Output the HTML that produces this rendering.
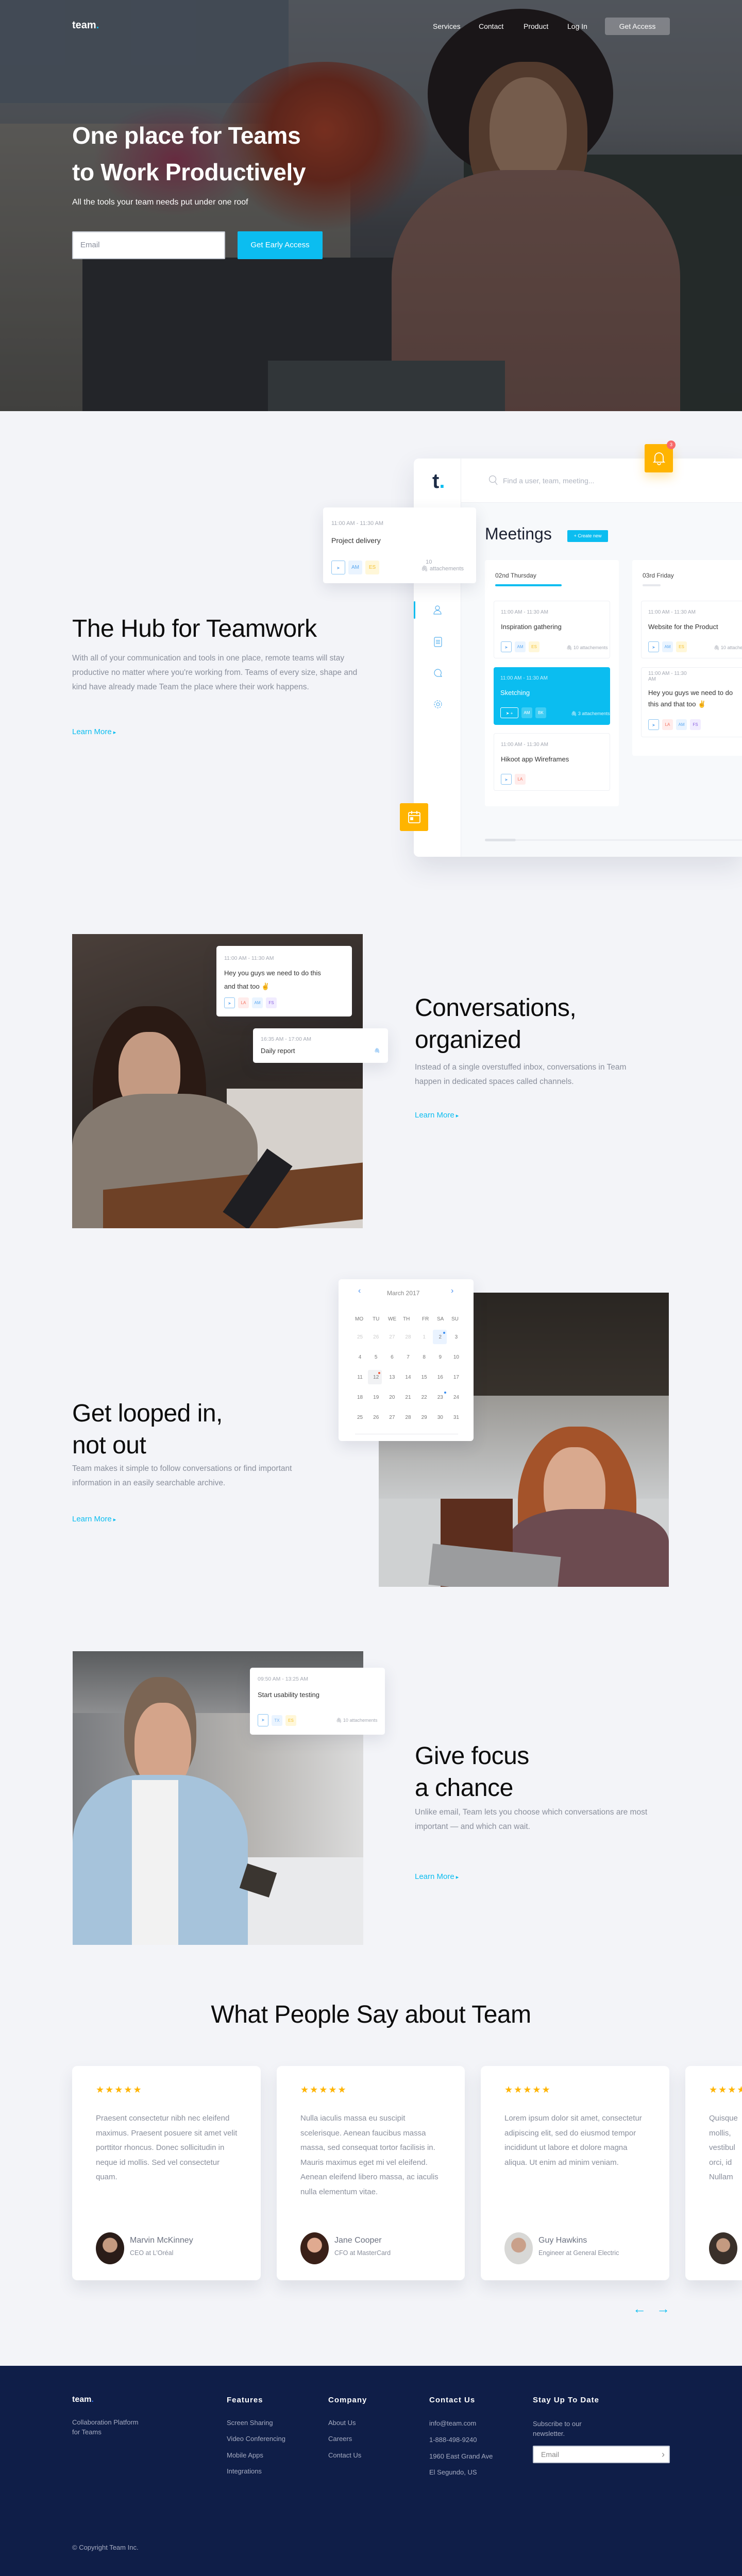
<!DOCTYPE html>
<html style="overflow:hidden;width:1440px;height:5041px"><head><meta charset="utf-8">
<style>
*{margin:0;padding:0;box-sizing:border-box}
html,body{overflow:hidden}
body{width:1440px;height:5041px;background:#f3f4f8;font-family:"Liberation Sans",sans-serif;position:relative;color:#111}
#w{position:absolute;left:0;top:0;width:1440px;height:5041px;overflow:hidden}
.a{position:absolute}
.h2{font-size:48px;font-weight:400;color:#0c0c0c;letter-spacing:-0.5px;line-height:62px}
.p{font-size:15.5px;color:#8a8f9c;line-height:28px}
.lm{font-size:15px;color:#0bbdf0}
.lm:after{content:" \25B8";font-size:11px}
.card{position:absolute;background:#fff;border-radius:5px;box-shadow:0 10px 30px rgba(40,50,80,.12)}
.tm{font-size:10px;color:#a5a9b3}
.tt{font-size:13px;color:#333}
.tg{display:inline-block;width:21px;height:21px;border-radius:3px;font-size:8px;text-align:center;line-height:21px;margin-right:6px;vertical-align:middle}
.ic{border:1px solid #8cc4f2;color:#6aaef0;background:#fff}
.am{background:#eaf4ff;color:#59a7f0}.es{background:#fff7d9;color:#f4c12e}.la{background:#ffeceb;color:#f2705e}.fs{background:#f1ecff;color:#8a5fe0}
.att{font-size:9px;color:#a5a9b3}
.tcard{position:absolute;top:4010px;width:366px;height:416px;background:#fff;border-radius:10px;box-shadow:0 15px 30px rgba(40,50,80,.10);overflow:hidden}
.stars{position:absolute;left:46px;top:36px;color:#ffb400;font-size:18px;letter-spacing:2px}
.tq{position:absolute;left:46px;top:88px;width:280px;font-size:15px;line-height:28.5px;color:#8a8f9c}
.av{position:absolute;left:46px;top:323px;width:55px;height:62px;border-radius:50%}
.nm{position:absolute;left:112px;top:330px;font-size:16px;color:#6b7180}
.rl{position:absolute;left:112px;top:356px;font-size:12.5px;color:#8a8f9c}
.fh{position:absolute;top:4650px;color:#fff;font-size:15px;font-weight:bold;letter-spacing:1px}
.fl{position:absolute;color:#a6acc2;font-size:13px}
</style></head><body><div id="w">

<!-- HERO -->
<div class="a" style="left:0;top:0;width:1440px;height:798px;overflow:hidden;background:#3b3d44">
  <div class="a" style="left:0;top:0;width:1440px;height:798px;background:linear-gradient(180deg,#6b7078 0%,#62656b 30%,#44464c 55%,#2c2e33 100%)"></div>
  <div class="a" style="left:0;top:0;width:560px;height:200px;background:#56606e"></div>
  <div class="a" style="left:-40px;top:240px;width:720px;height:560px;background:linear-gradient(180deg,#76736e,#54524e)"></div>
  <div class="a" style="left:420px;top:120px;width:420px;height:330px;border-radius:50%;background:radial-gradient(ellipse at 50% 40%,#a13a22 0%,#7d2c1c 35%,rgba(80,40,30,.0) 70%)"></div>
  <div class="a" style="left:180px;top:200px;width:320px;height:220px;border-radius:50%;background:radial-gradient(ellipse,#8a3450 0%,rgba(90,40,60,0) 70%)"></div>
  <div class="a" style="left:160px;top:500px;width:700px;height:300px;background:#2a2c30"></div>
  <div class="a" style="left:900px;top:300px;width:540px;height:500px;background:#2b3330"></div>
  <div class="a" style="left:830px;top:17px;width:360px;height:330px;border-radius:50%;background:#1e1618"></div>
  <div class="a" style="left:910px;top:120px;width:230px;height:300px;border-radius:45%;background:#6e4a36"></div>
  <div class="a" style="left:950px;top:150px;width:150px;height:210px;border-radius:48%;background:#a07a62"></div>
  <div class="a" style="left:760px;top:330px;width:560px;height:520px;border-radius:40% 40% 0 0;background:linear-gradient(180deg,#7b5a52,#6b4c46)"></div>
  <div class="a" style="left:520px;top:700px;width:460px;height:100px;background:#3e4447"></div>
  <div class="a" style="left:0;top:0;width:1440px;height:798px;background:rgba(20,22,28,.3)"></div>
  <div class="a" style="left:140px;top:38px;font-size:20px;font-weight:bold;color:#fff">team<span style="color:#0bbdf0">.</span></div>
  <div class="a" style="left:840px;top:43px;font-size:14px;color:#fff">Services</div>
  <div class="a" style="left:929px;top:43px;font-size:14px;color:#fff">Contact</div>
  <div class="a" style="left:1016px;top:43px;font-size:14px;color:#fff">Product</div>
  <div class="a" style="left:1101px;top:43px;font-size:14px;color:#fff">Log In</div>
  <div class="a" style="left:1174px;top:34px;width:126px;height:34px;border-radius:4px;background:rgba(255,255,255,.28);color:#fff;font-size:14px;text-align:center;line-height:34px">Get Access</div>
  <div class="a" style="left:140px;top:228px;font-size:46px;font-weight:bold;color:#fff;line-height:71px;letter-spacing:-0.3px">One place for Teams<br>to Work Productively</div>
  <div class="a" style="left:140px;top:384px;font-size:16px;color:#fff">All the tools your team needs put under one roof</div>
  <div class="a" style="left:140px;top:449px;width:297px;height:54px;background:#fff;border:2px solid #c8ccd4;border-radius:2px;padding-left:14px;line-height:50px;font-size:15px;color:#8a8f9c">Email</div>
  <div class="a" style="left:461px;top:449px;width:165px;height:54px;background:#0bbdf0;color:#fff;font-size:15px;text-align:center;line-height:54px;border-radius:2px">Get Early Access</div>
</div>

<!-- HUB -->
<div class="a h2" style="left:140px;top:1190px;">The Hub for Teamwork</div>
<div class="a p" style="left:140px;top:1264px;width:560px">With all of your communication and tools in one place, remote teams will stay productive no matter where you're working from. Teams of every size, shape and kind have already made Team the place where their work happens.</div>
<div class="a lm" style="left:140px;top:1412px">Learn More</div>

<div class="a" style="left:803px;top:890px;width:637px;height:773px;background:#f7f9fb;border-radius:10px 0 0 10px;box-shadow:0 20px 50px rgba(40,50,80,.12);overflow:hidden">
  <div class="a" style="left:0;top:0;width:92px;height:773px;background:#fff;border-right:1px solid #eceef2"></div>
  <div class="a" style="left:92px;top:0;width:545px;height:86px;background:#fff;border-bottom:1px solid #eceef2"></div>
  <div class="a" style="left:36px;top:22px;font-size:40px;font-weight:bold;color:#1c2b45">t<span style="color:#0bbdf0">.</span></div>
  <svg class="a" style="left:145px;top:32px" width="20" height="22" viewBox="0 0 20 22"><circle cx="8" cy="8" r="6.5" fill="none" stroke="#b6bac4" stroke-width="1.2"/><line x1="12.5" y1="13" x2="17" y2="19" stroke="#b6bac4" stroke-width="1.2"/></svg>
  <div class="a" style="left:173px;top:35px;font-size:14px;color:#b0b5c0">Find a user, team, meeting...</div>
  <div class="a" style="left:0;top:277px;width:3px;height:34px;background:#0bbdf0;border-radius:2px"></div>
  <svg class="a" style="left:38px;top:284px" width="18" height="20" viewBox="0 0 18 20" fill="none" stroke="#5bb2ee" stroke-width="1.2"><circle cx="8" cy="6" r="4"/><path d="M1 18c0-4 3-7 7-7s7 3 7 7z"/></svg>
  <svg class="a" style="left:39px;top:346px" width="16" height="20" viewBox="0 0 16 20" fill="none" stroke="#5bb2ee" stroke-width="1.2"><rect x="1" y="1" width="14" height="18" rx="2"/><path d="M4 7h8M4 10h8M4 13h8"/></svg>
  <svg class="a" style="left:38px;top:408px" width="18" height="20" viewBox="0 0 18 20" fill="none" stroke="#5bb2ee" stroke-width="1.2"><path d="M9 1a7 7 0 1 0 0 14h7l-2-3a7 7 0 0 0-5-11z"/></svg>
  <svg class="a" style="left:38px;top:468px" width="18" height="18" viewBox="0 0 18 18" fill="none" stroke="#5bb2ee" stroke-width="1.2"><circle cx="9" cy="9" r="3"/><circle cx="9" cy="9" r="7" stroke-dasharray="3 2"/></svg>
  <div class="a" style="left:138px;top:128px;font-size:32px;color:#1d2233">Meetings</div>
  <div class="a" style="left:298px;top:139px;width:79px;height:23px;background:#0bbdf0;color:#fff;font-size:9px;text-align:center;line-height:23px;border-radius:2px">+ Create new</div>
  <div class="a" style="left:138px;top:197px;width:260px;height:478px;background:#fff;border-radius:4px"></div>
  <div class="a" style="left:158px;top:220px;font-size:12px;color:#444">02nd Thursday</div>
  <div class="a" style="left:158px;top:244px;width:129px;height:4px;background:#0bbdf0;border-radius:2px"></div>
  <div class="a" style="left:424px;top:197px;width:300px;height:380px;background:#fff;border-radius:4px"></div>
  <div class="a" style="left:444px;top:220px;font-size:12px;color:#444">03rd Friday</div>
  <div class="a" style="left:444px;top:244px;width:35px;height:4px;background:#e6e8ec;border-radius:2px"></div>

  <div class="a" style="left:155px;top:276px;width:226px;height:112px;border:1px solid #eef0f4;border-radius:4px;background:#fff">
    <div class="a tm" style="left:13px;top:16px">11:00 AM - 11:30 AM</div>
    <div class="a tt" style="left:13px;top:42px">Inspiration gathering</div>
    <div class="a" style="left:13px;top:78px"><span class="tg ic">➤</span><span class="tg am">AM</span><span class="tg es">ES</span></div>
    <div class="a att" style="left:140px;top:85px">🖇 10 attachements</div>
  </div>
  <div class="a" style="left:155px;top:405px;width:226px;height:112px;border-radius:4px;background:#0bbdf0">
    <div class="a tm" style="left:13px;top:16px;color:#cdf0fc">11:00 AM - 11:30 AM</div>
    <div class="a tt" style="left:13px;top:42px;color:#fff">Sketching</div>
    <div class="a" style="left:13px;top:78px"><span class="tg" style="border:1px solid #fff;color:#fff;width:35px">➤ +</span><span class="tg" style="background:#3fcdf4;color:#fff">AM</span><span class="tg" style="background:#3fcdf4;color:#fff">BK</span></div>
    <div class="a att" style="left:150px;top:85px;color:#dff6fd">🖇 3 attachements</div>
  </div>
  <div class="a" style="left:155px;top:533px;width:226px;height:112px;border:1px solid #eef0f4;border-radius:4px;background:#fff">
    <div class="a tm" style="left:13px;top:16px">11:00 AM - 11:30 AM</div>
    <div class="a tt" style="left:13px;top:42px">Hikoot app Wireframes</div>
    <div class="a" style="left:13px;top:78px"><span class="tg ic">➤</span><span class="tg la">LA</span></div>
  </div>
  <div class="a" style="left:441px;top:276px;width:226px;height:112px;border:1px solid #eef0f4;border-radius:4px;background:#fff">
    <div class="a tm" style="left:13px;top:16px">11:00 AM - 11:30 AM</div>
    <div class="a tt" style="left:13px;top:42px">Website for the Product</div>
    <div class="a" style="left:13px;top:78px"><span class="tg ic">➤</span><span class="tg am">AM</span><span class="tg es">ES</span></div>
    <div class="a att" style="left:140px;top:85px">🖇 10 attachements</div>
  </div>
  <div class="a" style="left:441px;top:405px;width:226px;height:136px;border:1px solid #eef0f4;border-radius:4px;background:#fff">
    <div class="a tm" style="left:13px;top:6px;width:90px">11:00 AM - 11:30 AM</div>
    <div class="a tt" style="left:13px;top:38px;line-height:22px;width:170px">Hey you guys we need to do this and that too ✌</div>
    <div class="a" style="left:13px;top:100px"><span class="tg ic">➤</span><span class="tg la">LA</span><span class="tg am">AM</span><span class="tg fs">FS</span></div>
  </div>
  <div class="a" style="left:138px;top:738px;width:60px;height:5px;background:#dfe2e7;border-radius:3px"></div>
  <div class="a" style="left:198px;top:739px;width:439px;height:3px;background:#eceef2"></div>
</div>
<div class="card" style="left:627px;top:985px;width:297px;height:147px">
  <div class="a tm" style="left:16px;top:25px;font-size:11px">11:00 AM - 11:30 AM</div>
  <div class="a tt" style="left:16px;top:56px;font-size:14px">Project delivery</div>
  <div class="a" style="left:16px;top:103px"><span class="tg ic" style="width:27px;height:27px;line-height:27px">➤</span><span class="tg am" style="width:27px;height:27px;line-height:27px;font-size:10px">AM</span><span class="tg es" style="width:27px;height:27px;line-height:27px;font-size:10px">ES</span></div>
  <div class="a att" style="left:190px;top:100px;font-size:11px;line-height:13px">&nbsp;&nbsp;&nbsp;10<br>🖇 attachements</div>
</div>
<div class="a" style="left:1251px;top:862px;width:55px;height:55px;background:#ffb400;border-radius:3px;box-shadow:0 10px 20px rgba(255,180,0,.3)">
  <svg class="a" style="left:16px;top:13px" width="24" height="28" viewBox="0 0 24 28" fill="none" stroke="#fff" stroke-width="1.8"><path d="M4 20V12a8 8 0 0 1 16 0v8l2 2H2z"/><path d="M9 24a3 3 0 0 0 6 0"/></svg>
</div>
<div class="a" style="left:1294px;top:855px;width:17px;height:17px;border-radius:50%;background:#f86a6a;color:#fff;font-size:9px;text-align:center;line-height:17px">3</div>
<div class="a" style="left:776px;top:1559px;width:55px;height:54px;background:#ffb400;border-radius:3px">
  <svg class="a" style="left:15px;top:14px" width="26" height="26" viewBox="0 0 26 26" fill="none" stroke="#fff" stroke-width="1.8"><rect x="2" y="4" width="22" height="20" rx="2"/><path d="M2 10h22M8 1v6M18 1v6"/><rect x="6" y="14" width="4" height="4" fill="#fff"/></svg>
</div>

<!-- CONVERSATIONS -->
<div class="a" style="left:140px;top:1813px;width:564px;height:571px;overflow:hidden;background:linear-gradient(160deg,#4a3f3a,#2f2926 50%,#3a2f2a)">
  <div class="a" style="left:300px;top:300px;width:264px;height:271px;background:#d6d1cc"></div>
  <div class="a" style="left:40px;top:140px;width:220px;height:360px;border-radius:45%;background:#2a1a14"></div>
  <div class="a" style="left:90px;top:190px;width:120px;height:160px;border-radius:45%;background:#c49a82"></div>
  <div class="a" style="left:0;top:310px;width:360px;height:261px;border-radius:40% 40% 0 0;background:#857a70"></div>
  <div class="a" style="left:60px;top:470px;width:504px;height:110px;background:#6e4126;transform:skewY(-6deg)"></div>
  <div class="a" style="left:330px;top:420px;width:60px;height:150px;background:#1e1e22;transform:rotate(35deg)"></div>
</div>
<div class="card" style="left:420px;top:1836px;width:263px;height:137px">
  <div class="a tm" style="left:15px;top:18px;font-size:10.5px">11:00 AM - 11:30 AM</div>
  <div class="a tt" style="left:15px;top:40px;line-height:26px;width:200px">Hey you guys we need to do this and that too ✌</div>
  <div class="a" style="left:15px;top:100px"><span class="tg ic">➤</span><span class="tg la">LA</span><span class="tg am">AM</span><span class="tg fs">FS</span></div>
</div>
<div class="card" style="left:491px;top:1996px;width:262px;height:67px">
  <div class="a tm" style="left:15px;top:15px;font-size:10.5px">16:35 AM - 17:00 AM</div>
  <div class="a tt" style="left:15px;top:36px">Daily report</div>
  <div class="a att" style="left:235px;top:38px;color:#59a7f0">🖇</div>
</div>
<div class="a h2" style="left:805px;top:1926px">Conversations,<br>organized</div>
<div class="a p" style="left:805px;top:2058px;width:450px">Instead of a single overstuffed inbox, conversations in Team happen in dedicated spaces called channels.</div>
<div class="a lm" style="left:805px;top:2156px">Learn More</div>

<!-- LOOPED -->
<div class="a h2" style="left:140px;top:2713px">Get looped in,<br>not out</div>
<div class="a p" style="left:140px;top:2837px;width:450px">Team makes it simple to follow conversations or find important information in an easily searchable archive.</div>
<div class="a lm" style="left:140px;top:2940px">Learn More</div>
<div class="a" style="left:735px;top:2509px;width:563px;height:571px;overflow:hidden;background:#cfd1d2">
  <div class="a" style="left:0;top:0;width:563px;height:240px;background:linear-gradient(180deg,#2a2622,#3a342e)"></div>
  <div class="a" style="left:0;top:200px;width:563px;height:200px;background:linear-gradient(180deg,#9a9894,#c9cbcc)"></div>
  <div class="a" style="left:270px;top:260px;width:230px;height:330px;border-radius:45%;background:#a4532a"></div>
  <div class="a" style="left:320px;top:300px;width:120px;height:170px;border-radius:45%;background:#d9a98e"></div>
  <div class="a" style="left:250px;top:420px;width:313px;height:160px;border-radius:40% 40% 0 0;background:#6c4b50"></div>
  <div class="a" style="left:120px;top:400px;width:140px;height:171px;background:#5c2e1e"></div>
  <div class="a" style="left:100px;top:500px;width:250px;height:80px;background:#9b9c9e;transform:rotate(6deg)"></div>
</div>
<div class="card" style="left:657px;top:2483px;width:262px;height:314px;border-radius:6px">
  <div class="a" style="left:38px;top:14px;color:#4a90f0;font-size:16px">‹</div>
  <div class="a" style="left:94px;top:20px;font-size:12px;color:#888">March 2017</div>
  <div class="a" style="left:218px;top:14px;color:#4a90f0;font-size:16px">›</div>
  <div class="a" style="left:0;top:0;width:262px;font-size:10px;color:#777">
    <div class="a" style="left:32px;top:72px">MO</div><div class="a" style="left:66px;top:72px">TU</div><div class="a" style="left:96px;top:72px">WE</div><div class="a" style="left:125px;top:72px">TH</div><div class="a" style="left:162px;top:72px">FR</div><div class="a" style="left:191px;top:72px">SA</div><div class="a" style="left:219px;top:72px">SU</div>
  </div>
  <div class="a" style="left:183px;top:98px;width:27px;height:28px;background:#eaf3ff;border-radius:3px"></div>
  <div class="a" style="left:57px;top:176px;width:27px;height:28px;background:#f1f2f4;border-radius:3px"></div>
  <div class="a" style="left:203px;top:102px;width:4px;height:4px;border-radius:50%;background:#3a8ef0"></div>
  <div class="a" style="left:77px;top:180px;width:4px;height:4px;border-radius:50%;background:#f25a3a"></div>
  <div class="a" style="left:205px;top:218px;width:4px;height:4px;border-radius:50%;background:#3a8ef0"></div>
  <table class="a" style="left:26px;top:93px;width:218px;border-collapse:collapse;font-size:10px;color:#777;text-align:center">
    <tr style="height:39px;color:#ccc"><td>25</td><td>26</td><td>27</td><td>28</td><td>1</td><td style="color:#777">2</td><td style="color:#777">3</td></tr>
    <tr style="height:39px"><td>4</td><td>5</td><td>6</td><td>7</td><td>8</td><td>9</td><td>10</td></tr>
    <tr style="height:39px"><td>11</td><td>12</td><td>13</td><td>14</td><td>15</td><td>16</td><td>17</td></tr>
    <tr style="height:39px"><td>18</td><td>19</td><td>20</td><td>21</td><td>22</td><td>23</td><td>24</td></tr>
    <tr style="height:39px"><td>25</td><td>26</td><td>27</td><td>28</td><td>29</td><td>30</td><td>31</td></tr>
  </table>
  <div class="a" style="left:32px;top:300px;width:200px;height:1px;background:#e6e8ec"></div>
</div>

<!-- FOCUS -->
<div class="a" style="left:141px;top:3205px;width:564px;height:570px;overflow:hidden;background:linear-gradient(90deg,#7a7c80,#b5b3b0 60%,#dcdcdc)">
  <div class="a" style="left:0;top:0;width:564px;height:120px;background:linear-gradient(180deg,#5a5c5e,#8d8e90)"></div>
  <div class="a" style="left:320px;top:400px;width:244px;height:170px;background:#e9eaec"></div>
  <div class="a" style="left:100px;top:50px;width:140px;height:210px;border-radius:45%;background:#7b6554"></div>
  <div class="a" style="left:120px;top:100px;width:110px;height:170px;border-radius:45%;background:#d4a48a"></div>
  <div class="a" style="left:0;top:240px;width:340px;height:330px;border-radius:40% 40% 0 0;background:#a6c3db"></div>
  <div class="a" style="left:115px;top:250px;width:90px;height:320px;background:#f2f2f2"></div>
  <div class="a" style="left:330px;top:420px;width:60px;height:50px;background:#3a3530;transform:rotate(18deg)"></div>
</div>
<div class="card" style="left:485px;top:3237px;width:262px;height:130px">
  <div class="a tm" style="left:15px;top:16px;font-size:10.5px">09:50 AM - 13:25 AM</div>
  <div class="a tt" style="left:15px;top:45px">Start usability testing</div>
  <div class="a" style="left:15px;top:90px"><span class="tg ic" style="height:24px">➤</span><span class="tg am" style="color:#7ab3f0">TX</span><span class="tg es">ES</span></div>
  <div class="a att" style="left:167px;top:97px">🖇 10 attachements</div>
</div>
<div class="a h2" style="left:805px;top:3378px">Give focus<br>a chance</div>
<div class="a p" style="left:805px;top:3504px;width:460px">Unlike email, Team lets you choose which conversations are most important — and which can wait.</div>
<div class="a lm" style="left:805px;top:3634px">Learn More</div>

<!-- TESTIMONIALS -->
<div class="a h2" style="left:0;top:3880px;width:1440px;text-align:center">What People Say about Team</div>
<div class="tcard" style="left:140px">
  <div class="stars">★★★★★</div>
  <div class="tq">Praesent consectetur nibh nec eleifend maximus. Praesent posuere sit amet velit porttitor rhoncus. Donec sollicitudin in neque id mollis. Sed vel consectetur quam.</div>
  <div class="av" style="background:radial-gradient(circle at 50% 40%,#c49a80 0 30%,#2a1c18 32%)"></div>
  <div class="nm">Marvin McKinney</div><div class="rl">CEO at L'Oréal</div>
</div>
<div class="tcard" style="left:537px;width:365px">
  <div class="stars">★★★★★</div>
  <div class="tq">Nulla iaculis massa eu suscipit scelerisque. Aenean faucibus massa massa, sed consequat tortor facilisis in. Mauris maximus eget mi vel eleifend. Aenean eleifend libero massa, ac iaculis nulla elementum vitae.</div>
  <div class="av" style="background:radial-gradient(circle at 50% 40%,#e0aa90 0 30%,#3a2018 32%)"></div>
  <div class="nm">Jane Cooper</div><div class="rl">CFO at MasterCard</div>
</div>
<div class="tcard" style="left:933px">
  <div class="stars">★★★★★</div>
  <div class="tq">Lorem ipsum dolor sit amet, consectetur adipiscing elit, sed do eiusmod tempor incididunt ut labore et dolore magna aliqua. Ut enim ad minim veniam.</div>
  <div class="av" style="background:radial-gradient(circle at 50% 40%,#c9a08a 0 30%,#d8d8d6 32%)"></div>
  <div class="nm">Guy Hawkins</div><div class="rl">Engineer at General Electric</div>
</div>
<div class="tcard" style="left:1330px;width:110px;border-radius:10px 0 0 10px">
  <div class="stars">★★★★★</div>
  <div class="tq" style="width:60px">Quisque mollis, vestibul orci, id Nullam</div>
  <div class="av" style="background:radial-gradient(circle at 50% 40%,#c49a80 0 28%,#3a302a 30%)"></div>
</div>
<div class="a" style="left:1228px;top:4466px;color:#0bbdf0;font-size:26px">←</div>
<div class="a" style="left:1274px;top:4466px;color:#0bbdf0;font-size:26px">→</div>

<!-- FOOTER -->
<div class="a" style="left:0;top:4592px;width:1440px;height:449px;background:#0f1e48"></div>
<div class="a" style="left:140px;top:4649px;color:#fff;font-size:16px;font-weight:bold">team<span style="color:#2a6ef0">.</span></div>
<div class="fl" style="left:140px;top:4692px;line-height:19px">Collaboration Platform<br>for Teams</div>
<div class="fh" style="left:440px">Features</div>
<div class="fh" style="left:637px">Company</div>
<div class="fh" style="left:833px">Contact Us</div>
<div class="fh" style="left:1034px">Stay Up To Date</div>
<div class="fl" style="left:440px;top:4695px">Screen Sharing</div>
<div class="fl" style="left:440px;top:4726px">Video Conferencing</div>
<div class="fl" style="left:440px;top:4758px">Mobile Apps</div>
<div class="fl" style="left:440px;top:4789px">Integrations</div>
<div class="fl" style="left:637px;top:4695px">About Us</div>
<div class="fl" style="left:637px;top:4726px">Careers</div>
<div class="fl" style="left:637px;top:4758px">Contact Us</div>
<div class="fl" style="left:833px;top:4696px">info@team.com</div>
<div class="fl" style="left:833px;top:4728px">1-888-498-9240</div>
<div class="fl" style="left:833px;top:4760px">1960 East Grand Ave</div>
<div class="fl" style="left:833px;top:4791px">El Segundo, US</div>
<div class="fl" style="left:1034px;top:4695px;line-height:19px">Subscribe to our<br>newsletter.</div>
<div class="a" style="left:1034px;top:4747px;width:266px;height:34px;background:#fff;border:2px solid #c4cad6;border-radius:2px;padding-left:14px;line-height:30px;font-size:14px;color:#888">Email<span style="position:absolute;right:8px;top:0;color:#888;font-size:18px">›</span></div>
<div class="fl" style="left:140px;top:4937px">© Copyright Team Inc.</div>
</div></body></html>
